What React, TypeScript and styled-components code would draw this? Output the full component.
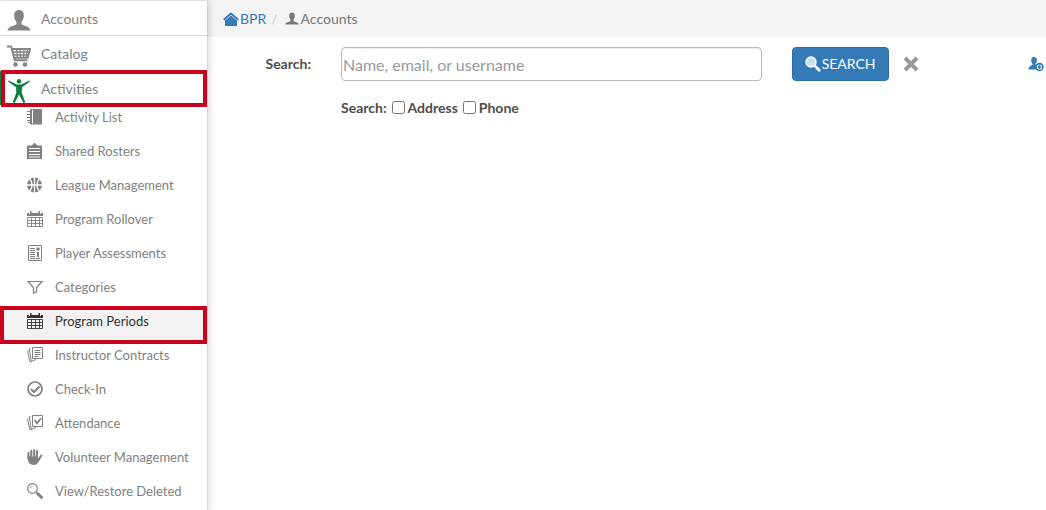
import React from "react";
import styled, { createGlobalStyle, css } from "styled-components";

const GlobalStyle = createGlobalStyle`
  *, *::before, *::after { box-sizing: border-box; }
  body {
    margin: 0;
    background: #fff;
    color: #4d4d4d;
    font-family: Lato, "Liberation Sans", sans-serif;
    font-size: 14px;
    line-height: 20px;
  }
`;

const Shell = styled.div`
  display: flex;
  min-height: 100vh;
`;

const Sidebar = styled.nav`
  position: relative;
  z-index: 1;
  flex: 0 0 207px;
  margin-top: 1px;
  background: #fff;
  box-shadow: 0 0 1px rgba(0, 0, 0, 0.35), 2px 0 8px rgba(0, 0, 0, 0.16);
`;

const List = styled.ul`
  margin: 0;
  padding: 0;
  list-style: none;
`;

const highlight = css`
  position: relative;
  &::after {
    content: "";
    position: absolute;
    inset: -3px 0 -1px 0;
    border: 4px solid #c9001f;
    pointer-events: none;
  }
`;

const SectionLink = styled.a<{ $divided?: boolean; $active?: boolean }>`
  display: flex;
  align-items: flex-start;
  gap: 10px;
  height: 35px;
  padding-left: 7px;
  border-bottom: ${(p) => (p.$divided ? "1px solid #d6d6d6" : "0")};
  color: #808080;
  line-height: 36px;
  text-decoration: none;
  svg { margin-top: 8px; color: ${(p) => (p.$active ? "#0e7d3f" : "#858585")}; }
  ${(p) =>
    p.$active &&
    css`
      height: 34px;
      box-shadow: inset 1px 0 #0e7d3f;
      ${highlight}
      &::after { inset: -1px 0 -2px 1px; }
    `}
`;

const ItemLink = styled.a<{ $active?: boolean }>`
  display: flex;
  align-items: flex-start;
  gap: 12px;
  height: 34px;
  padding-left: 27px;
  font-size: 13px;
  line-height: 24px;
  color: ${(p) => (p.$active ? "#333" : "#808080")};
  background: ${(p) => (p.$active ? "#f2f2f2" : "transparent")};
  text-decoration: none;
  svg { margin-top: 4px; }
  ${(p) => p.$active && highlight}
`;

const Icon = styled.svg<{ $size: number }>`
  flex: none;
  width: ${(p) => p.$size}px;
  height: ${(p) => p.$size}px;
  fill: currentColor;
`;

const Main = styled.main`
  flex: 1;
  min-width: 0;
`;

const Breadcrumb = styled.ol`
  display: flex;
  align-items: center;
  height: 37px;
  margin: 0;
  padding: 1px 16px 0;
  background: #f4f4f4;
  list-style: none;
  color: #777;
`;

const Crumb = styled.li`
  display: flex;
  align-items: center;
  gap: 2px;
  & + &::before {
    content: "/";
    padding: 0 5px;
    color: #ccc;
  }
  a {
    display: flex;
    align-items: center;
    gap: 1px;
    color: #337ab7;
    text-decoration: none;
  }
`;

const SearchForm = styled.form`
  display: grid;
  grid-template-columns: 104px 5fr 3fr;
  gap: 17px 30px;
  padding: 10px 2px 0 0;
`;

const FieldLabel = styled.label`
  line-height: 34px;
  text-align: right;
  font-weight: 700;
`;

const TextInput = styled.input`
  width: 100%;
  height: 34px;
  padding: 1px;
  border: 1px solid #bbb;
  border-radius: 4px;
  box-shadow: inset 0 1px 1px rgba(0, 0, 0, 0.08);
  font: 16px/24px Lato, "Liberation Sans", sans-serif;
  color: #555;
  &::placeholder { color: #999; opacity: 1; }
`;

const Actions = styled.div`
  display: flex;
  align-items: center;
`;

const SearchButton = styled.button`
  display: flex;
  align-items: center;
  gap: 1px;
  height: 34px;
  padding: 0 12px;
  border: 1px solid #2e6da4;
  border-radius: 4px;
  background: #337ab7;
  color: #fff;
  font: 14px/20px Lato, "Liberation Sans", sans-serif;
`;

const IconButton = styled.button<{ $tone: string; $end?: boolean }>`
  display: flex;
  margin-left: ${(p) => (p.$end ? "auto" : "14px")};
  padding: 0;
  border: 0;
  background: none;
  color: ${(p) => p.$tone};
`;

const Options = styled.div`
  grid-column: 2 / -1;
  display: flex;
  align-items: center;
  gap: 5px;
  font-weight: 700;
  line-height: 20px;
`;

const Option = styled.label`
  display: flex;
  align-items: center;
  gap: 3px;
  input { width: 13px; height: 13px; margin: 0 0 2px; }
`;

const line = { fill: "none", stroke: "currentColor" } as const;

const Bust = (
  <path d="M12 1c3.600 0 5 2.400 4.800 6-.1 2.600-1 4.300-2 5.500-.5.700-.5 2.800.3 3.200 3.600 1.800 7.900 1.800 8.400 5.800H.5c.5-4 4.800-4 8.400-5.800.8-.4.8-2.500.3-3.200-1-1.200-1.900-2.900-2-5.500C7 3.400 8.400 1 12 1z" />
);

const Calendar = (
  <>
    <path fillRule="evenodd" d="M0 2h16v3H0zM2 2v1h1V2zm11 0v1h1V2z" />
    <path d="M3 0h1.500v3.500H3zM11.500 0H13v3.500h-1.500z" />
    <path {...line} strokeWidth=".9" d="M.5 6.500h15v9H.5zM0 9.500h16M0 12.500h16M4.500 6v9.500M8.500 6v9.500M12.500 6v9.500" />
  </>
);

const StackedPages = (
  <path
    {...line}
    d="M5.500.5h10v11h-10zM3.500 1.500l-1.200.3 2 12.700 4.500-2M1.500 3.500l-1 .5 2.300 10.500 1.700.5"
  />
);

const glyphs: Record<string, { box: number; art: React.ReactNode }> = {
  user: { box: 24, art: Bust },
  cart: {
    box: 24,
    art: (
      <>
        <path {...line} strokeWidth="2" d="M0 2.500h4.200l3.600 13.700h12.700M5 5h18.200l-2.700 8.700H7.200" />
        <path {...line} strokeWidth="1.300" d="M6 8h16M7 11h14M9.500 5l1 9M13 5l.5 9M17 5l-.5 9M20.500 5l-1.500 9" />
        <circle cx="8.500" cy="20.500" r="2.300" />
        <circle cx="18" cy="20.500" r="2.300" />
      </>
    ),
  },
  person: {
    box: 24,
    art: (
      <>
        <circle cx="12" cy="2.200" r="2.200" />
        <path d="M1 2.600l.8-1.200 8 4.200h4.400l8-4.200.8 1.200-8 5.600-.3 5.600 3.600 9.500-1.900.7L12 15.500 7.600 24l-1.900-.7 3.600-9.500L9 8.200z" />
      </>
    ),
  },
  notebook: {
    box: 16,
    art: (
      <>
        <path d="M3 0h12v15.500H3zM5 1v13.500h1V1z" fillRule="evenodd" />
        <path {...line} d="M0 2.500h4M0 5.500h4M0 8.500h4M0 11.500h4M1 13.500h3" />
      </>
    ),
  },
  clipboard: {
    box: 16,
    art: (
      <path
        fillRule="evenodd"
        d="M0 2.500h4.500L6 1.500C6.300.3 7 0 7.500 0S8.700.3 9 1.500l1.500 1H15V16H0zM2 5v1h11V5zm0 3v1h11V8zm0 3v1h11v-1zm0 2.500v1h11v-1z"
      />
    ),
  },
  ball: {
    box: 16,
    art: (
      <>
        <circle cx="7.500" cy="8" r="7.500" />
        <path
          fill="none"
          stroke="#fff"
          strokeWidth="1.300"
          d="M7.500 0v16M0 8h15M2.500 1.500c3.300 4 3.300 9 0 13M12.500 1.500c-3.300 4-3.300 9 0 13"
        />
      </>
    ),
  },
  calendar: { box: 16, art: Calendar },
  report: {
    box: 16,
    art: (
      <>
        <path {...line} d="M1.500.5h13v15h-13z" />
        <path {...line} d="M3 3.500h5M3 5.500h5M3 7.500h5M3 9.500h5M3 11.500h5M3 13.500h5M9 13.500h4M9.500 7.500h2" />
        <circle cx="11" cy="4" r="1.800" />
        <path d="M10 7h2v5h-2z" />
      </>
    ),
  },
  funnel: {
    box: 16,
    art: <path {...line} strokeWidth="1.200" d="M1 2.500h14L9.500 8.800v4L6.500 14V8.800z" />,
  },
  contracts: {
    box: 16,
    art: (
      <>
        {StackedPages}
        <path {...line} d="M7.500 3.500h6M7.500 5.500h6M7.500 7.500h6M7.500 9.500h4" />
      </>
    ),
  },
  check: {
    box: 16,
    art: (
      <>
        <circle {...line} strokeWidth="1.700" cx="8" cy="8" r="7" />
        <path {...line} strokeWidth="2" d="M4 8l3 3 5.500-5.500" />
      </>
    ),
  },
  attendance: {
    box: 16,
    art: (
      <>
        {StackedPages}
        <path {...line} strokeWidth="1.800" d="M7.500 5l2.500 3.200 4-5" />
      </>
    ),
  },
  hand: {
    box: 16,
    art: (
      <>
        <path
          {...line}
          strokeWidth="2"
          strokeLinecap="round"
          d="M1.500 4v5M4.300 1.800V9M7.200 1v8M10 2v7M11 11.500l3.300-5"
        />
        <path d="M.5 7.500h10.500v3l1.600-1.500 1 .5c-1.300 2-2 4-4 5.700-1.500 1-4.600 1-6 0C1.200 14 .5 11 .5 7.500z" />
      </>
    ),
  },
  magnifier: {
    box: 16,
    art: (
      <>
        <circle {...line} strokeWidth="1.200" cx="5.500" cy="5.500" r="4.800" />
        <path {...line} strokeWidth=".8" d="M3 5.500C3 4 4 3 5.500 3" />
        <path {...line} strokeWidth="3" strokeLinecap="round" d="M10.500 10.500l4 3.800" />
      </>
    ),
  },
  home: {
    box: 16,
    art: (
      <>
        <path d="M8 4.500l6 5V15H2V9.500z" />
        <path {...line} strokeWidth="1.800" d="M.7 8.800L8 2.500l7.300 6.300" />
      </>
    ),
  },
  lens: {
    box: 16,
    art: (
      <>
        <circle cx="6" cy="6" r="5" fill="#c9def0" stroke="currentColor" strokeWidth="1.400" />
        <path {...line} strokeWidth="2.800" strokeLinecap="round" d="M10.800 10.800l3.400 3.400" />
      </>
    ),
  },
  clear: {
    box: 16,
    art: <path {...line} strokeWidth="4" d="M2 2l12 12M14 2L2 14" />,
  },
  addUser: {
    box: 16,
    art: (
      <>
        <path d="M6 1c2 0 3 1.400 2.900 3.500-.1 1.500-.6 2.500-1.200 3.200-.3.500-.2 1.200.3 1.400L8 13.500H.5c0-3 2.300-3.500 3.700-4.400.5-.3.500-.9.200-1.400-.6-.7-1.100-1.700-1.200-3.200C3.100 2.400 4 1 6 1z" />
        <circle cx="11.500" cy="11" r="3.400" fill="#fff" stroke="currentColor" strokeWidth="1.600" />
        <path {...line} strokeWidth="1.300" d="M11.500 9v4M9.500 11h4" />
      </>
    ),
  },
};

function Glyph({ name, size = 16 }: { name: string; size?: number }) {
  const { box, art } = glyphs[name];
  return (
    <Icon $size={size} viewBox={`0 0 ${box} ${box}`} aria-hidden="true">
      {art}
    </Icon>
  );
}

const activityItems = [
  ["Activity List", "notebook"],
  ["Shared Rosters", "clipboard"],
  ["League Management", "ball"],
  ["Program Rollover", "calendar"],
  ["Player Assessments", "report"],
  ["Categories", "funnel"],
  ["Program Periods", "calendar"],
  ["Instructor Contracts", "contracts"],
  ["Check-In", "check"],
  ["Attendance", "attendance"],
  ["Volunteer Management", "hand"],
  ["View/Restore Deleted", "magnifier"],
];

export default function App() {
  return (
    <>
      <GlobalStyle />
      <Shell>
        <Sidebar>
          <List>
            <li>
              <SectionLink href="#accounts" $divided>
                <Glyph name="user" size={24} />
                Accounts
              </SectionLink>
            </li>
            <li>
              <SectionLink href="#catalog">
                <Glyph name="cart" size={24} />
                Catalog
              </SectionLink>
            </li>
            <li>
              <SectionLink href="#activities" $active>
                <Glyph name="person" size={24} />
                Activities
              </SectionLink>
              <List>
                {activityItems.map(([label, icon]) => (
                  <li key={label}>
                    <ItemLink href="#activities" $active={label === "Program Periods"}>
                      <Glyph name={icon} />
                      {label}
                    </ItemLink>
                  </li>
                ))}
              </List>
            </li>
          </List>
        </Sidebar>
        <Main>
          <Breadcrumb>
            <Crumb>
              <a href="#home">
                <Glyph name="home" />
                BPR
              </a>
            </Crumb>
            <Crumb>
              <Glyph name="user" size={14} />
              Accounts
            </Crumb>
          </Breadcrumb>
          <SearchForm onSubmit={(e) => e.preventDefault()}>
            <FieldLabel htmlFor="query">Search:</FieldLabel>
            <TextInput id="query" type="text" placeholder="Name, email, or username" />
            <Actions>
              <SearchButton type="submit">
                <Glyph name="lens" />
                SEARCH
              </SearchButton>
              <IconButton type="button" aria-label="Clear" $tone="#999">
                <Glyph name="clear" />
              </IconButton>
              <IconButton type="button" aria-label="Add account" $tone="#337ab7" $end>
                <Glyph name="addUser" />
              </IconButton>
            </Actions>
            <Options>
              <span>Search:</span>
              <Option>
                <input type="checkbox" name="address" />
                Address
              </Option>
              <Option>
                <input type="checkbox" name="phone" />
                Phone
              </Option>
            </Options>
          </SearchForm>
        </Main>
      </Shell>
    </>
  );
}
